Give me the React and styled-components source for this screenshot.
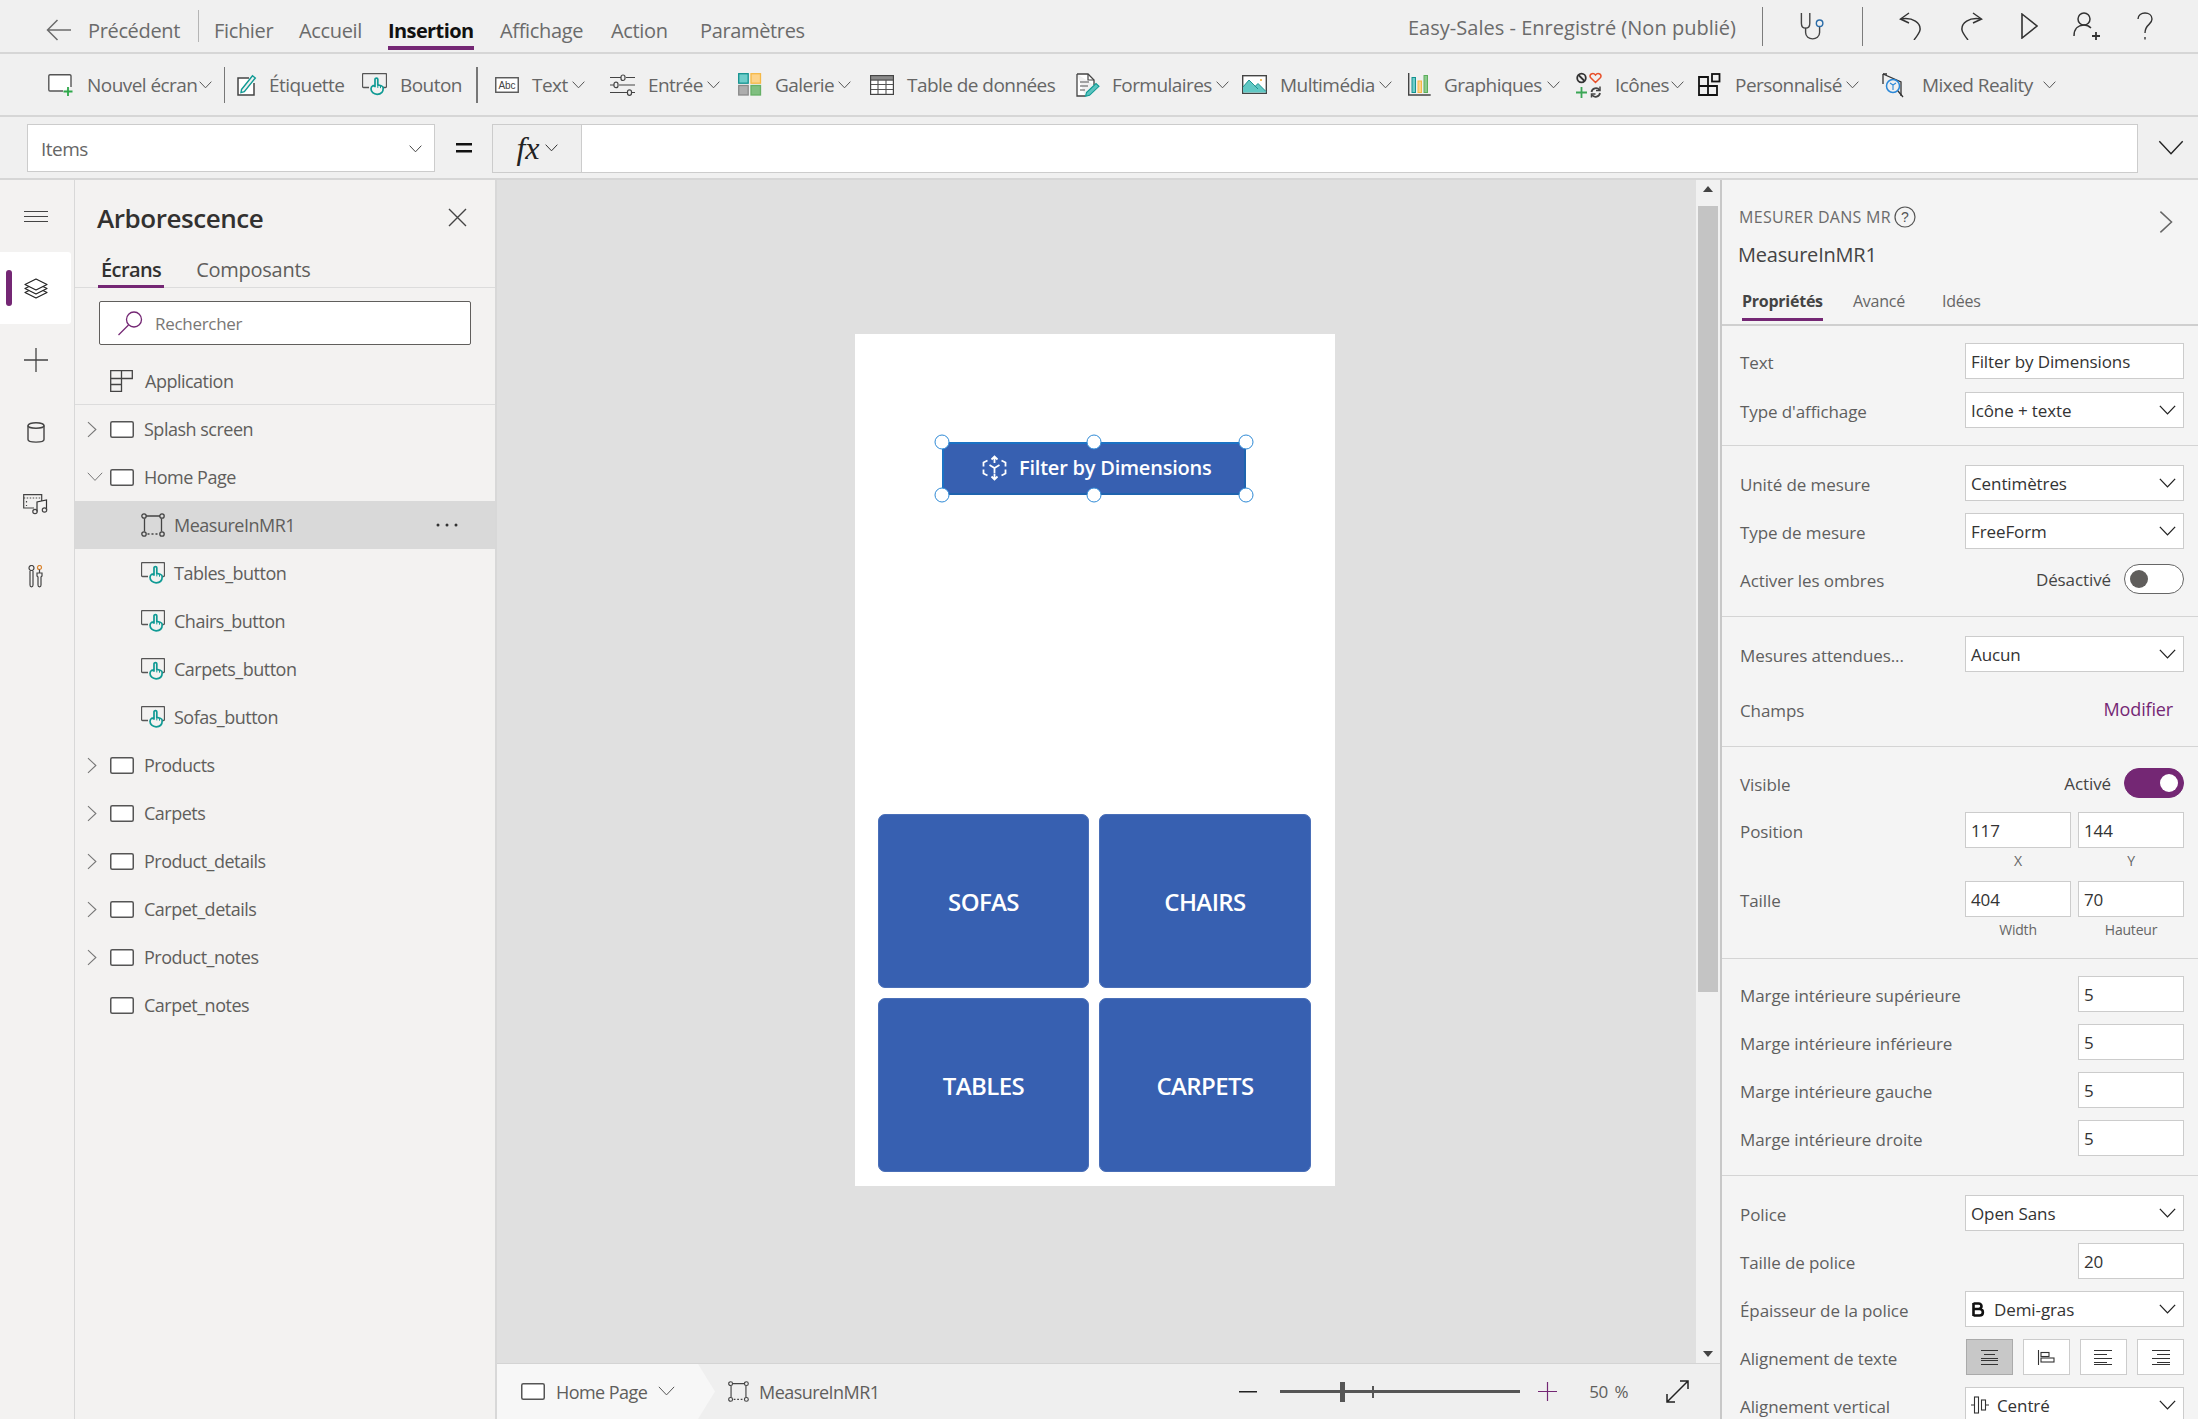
import React from "react";
import styled, { createGlobalStyle } from "styled-components";

const purple = "#742774";
const blue = "#3760b1";

const GlobalStyle = createGlobalStyle`
  html, body { margin: 0; padding: 0; background: #f0f0f0; }
  body { font-family: "Open Sans", "Noto Sans", sans-serif; overflow: hidden; }
  * { box-sizing: border-box; }
  svg { display: block; flex-shrink: 0; }
`;

const Page = styled.div`
  width: 2198px;
  height: 1419px;
  display: flex;
  flex-direction: column;
  overflow: hidden;
  color: #605e5c;
`;

/* top menu */
const MenuBar = styled.div`
  height: 54px;
  flex-shrink: 0;
  display: flex;
  align-items: stretch;
  padding-left: 46px;
  background: #f0f0f0;
  border-bottom: 2px solid #d6d6d6;
  font-size: 20px;
  letter-spacing: -0.35px;
`;
const BackArrow = styled.div`
  width: 42px;
  display: flex;
  align-items: center;
  padding-top: 8px;
`;
const MenuItem = styled.div`
  width: ${(p) => p.$w}px;
  display: flex;
  align-items: center;
  color: #6b6b6b;
  padding-top: 8px;
`;
const MenuSep = styled.div`
  width: 1px;
  height: 32px;
  margin: 10px 15px 0 0;
  background: #b5b5b5;
`;
const ActiveMenu = styled.div`
  width: 112px;
  position: relative;
  display: flex;
  align-items: center;
  color: #111;
  font-weight: 700;
  letter-spacing: -0.6px;
  padding-top: 8px;
  &::after {
    content: "";
    position: absolute;
    left: 0;
    width: 86px;
    top: 46px;
    height: 4px;
    background: ${purple};
  }
`;
const MenuRight = styled.div`
  margin-left: auto;
  display: flex;
  align-items: center;
  padding-right: 45px;
`;
const DocTitle = styled.div`
  color: #6b6b6b;
  font-size: 20px;
  letter-spacing: 0.02px;
  margin-right: 26px;
  padding-top: 3px;
  white-space: nowrap;
`;
const RightSep = styled.div`
  width: 1px;
  height: 39px;
  background: #7c7c7c;
  margin: 0 ${(p) => p.$r}px 0 0;
`;
const RightIcon = styled.div`
  margin-right: ${(p) => p.$r}px;
`;

/* insert toolbar */
const ToolBar = styled.div`
  height: 63px;
  flex-shrink: 0;
  display: flex;
  align-items: center;
  padding-left: 48px;
  background: #f0f0f0;
  border-bottom: 2px solid #d6d6d6;
  font-size: 19px;
  letter-spacing: -0.55px;
  color: #666;
`;
const ToolItem = styled.div`
  width: ${(p) => p.$w}px;
  display: flex;
  align-items: center;
  white-space: nowrap;
`;
const ToolIcon = styled.div`
  width: ${(p) => p.$w}px;
  display: flex;
  align-items: center;
`;
const ToolChevron = styled.div`
  margin-left: ${(p) => p.$m || 4}px;
`;
const ToolSep = styled.div`
  width: ${(p) => p.$b}px;
  height: 36px;
  margin-right: ${(p) => p.$r}px;
  background: #777;
`;

/* formula bar */
const FormulaBar = styled.div`
  height: 63px;
  flex-shrink: 0;
  display: flex;
  align-items: center;
  padding: 1px 0 0 27px;
  background: #f0f0f0;
  border-bottom: 2px solid #d6d6d6;
`;
const PropSelect = styled.div`
  width: 408px;
  height: 48px;
  background: #fff;
  border: 1px solid #ccc;
  display: flex;
  align-items: center;
  justify-content: space-between;
  padding: 2px 12px 0 13px;
  font-size: 19px;
  letter-spacing: -0.5px;
  color: #666;
`;
const EqualSign = styled.div`
  width: 57px;
  display: flex;
  justify-content: center;
`;
const FxBox = styled.div`
  width: 89px;
  height: 49px;
  background: #efefef;
  border: 1px solid #ccc;
  border-right: none;
  display: flex;
  align-items: center;
  justify-content: center;
  gap: 5px;
  font-family: "Liberation Serif", serif;
  font-style: italic;
  font-size: 32px;
  color: #222;
`;
const FormulaInput = styled.div`
  width: 1557px;
  height: 49px;
  background: #fff;
  border: 1px solid #ccc;
`;
const FormulaToggle = styled.div`
  margin-left: 20px;
`;

/* main area */
const Main = styled.div`
  flex: 1;
  min-height: 0;
  display: flex;
`;
const Rail = styled.div`
  width: 75px;
  flex-shrink: 0;
  background: #f3f2f1;
  border-right: 1px solid #d8d8d8;
  display: flex;
  flex-direction: column;
  padding-right: 3px;
`;
const RailButton = styled.div`
  height: 72px;
  display: flex;
  align-items: center;
  justify-content: center;
  position: relative;
  background: ${(p) => (p.$active ? "#fff" : "transparent")};
  border-radius: 0 3px 3px 0;
  &::before {
    content: "";
    display: ${(p) => (p.$active ? "block" : "none")};
    position: absolute;
    left: 6px;
    top: 18px;
    width: 6px;
    height: 36px;
    border-radius: 3px;
    background: ${purple};
  }
`;

const TreePanel = styled.div`
  width: 422px;
  flex-shrink: 0;
  background: #f3f2f1;
  border-right: 2px solid #d8d8d8;
  display: flex;
  flex-direction: column;
`;
const PanelHead = styled.div`
  height: 72px;
  display: flex;
  align-items: center;
  justify-content: space-between;
  padding: 3px 28px 0 22px;
`;
const PanelTitle = styled.div`
  font-size: 26px;
  font-weight: 600;
  color: #323130;
  letter-spacing: -0.45px;
`;
const TabRow = styled.div`
  height: 36px;
  display: flex;
  gap: 29px;
  padding-left: 23px;
  border-bottom: 1px solid #dcdcdc;
`;
const PanelTab = styled.div`
  height: 36px;
  font-size: 20px;
  letter-spacing: ${(p) => (p.$active ? -0.6 : -0.25)}px;
  line-height: 36px;
  padding: 0 3px;
  color: ${(p) => (p.$active ? "#323130" : "#605e5c")};
  font-weight: ${(p) => (p.$active ? 600 : 400)};
  border-bottom: ${(p) => (p.$active ? `3px solid ${purple}` : "none")};
`;
const SearchBox = styled.div`
  height: 44px;
  margin: 13px 24px 0 24px;
  background: #fff;
  border: 1px solid #605e5c;
  border-radius: 2px;
  display: flex;
  align-items: center;
  gap: 12px;
  padding-left: 18px;
  font-size: 17px;
  letter-spacing: -0.3px;
  color: #797775;
`;
const AppRow = styled.div`
  height: 60px;
  padding: 12px 0 0 35px;
  display: flex;
  align-items: center;
  gap: 12px;
  font-size: 18px;
  letter-spacing: -0.5px;
  border-bottom: 1px solid #dcdcdc;
`;
const TreeRow = styled.div`
  height: 48px;
  flex-shrink: 0;
  display: flex;
  align-items: center;
  padding-left: ${(p) => (p.$child ? 66 : 12)}px;
  padding-right: 37px;
  font-size: 18px;
  letter-spacing: -0.5px;
  background: ${(p) => (p.$selected ? "#d9d9d9" : "transparent")};
`;
const TreeCaret = styled.div`
  width: 23px;
`;
const TreeIcon = styled.div`
  width: ${(p) => (p.$child ? 33 : 34)}px;
`;
const RowMore = styled.div`
  margin-left: auto;
`;

/* canvas */
const CanvasColumn = styled.div`
  flex: 1;
  min-width: 0;
  display: flex;
  flex-direction: column;
`;
const Stage = styled.div`
  flex: 1;
  min-height: 0;
  display: flex;
`;
const CanvasArea = styled.div`
  flex: 1;
  background: #e0e0e0;
  padding: 154px 0 0 358px;
`;
const Frame = styled.div`
  width: 480px;
  height: 852px;
  background: #fff;
  padding: 108px 24px 0 22px;
`;
const FilterButton = styled.div`
  position: relative;
  width: 304px;
  height: 53px;
  margin-left: 65px;
  background: ${blue};
  box-shadow: inset 2px 2px 0 #1b72c4, inset -2px -2px 0 #1f63ae;
  display: flex;
  align-items: center;
  gap: 12px;
  padding: 0 0 2px 40px;
  color: #fff;
  font-size: 20px;
  font-weight: 600;
  letter-spacing: -0.22px;
`;
const Handle = styled.span`
  position: absolute;
  width: 15px;
  height: 15px;
  border-radius: 50%;
  background: #fff;
  border: 1.5px solid #2f8ad6;
  left: ${(p) => p.$x}%;
  top: ${(p) => p.$y}%;
  transform: translate(-50%, -50%);
`;
const TileGrid = styled.div`
  margin-top: 319px;
  margin-left: 1px;
  display: grid;
  grid-template-columns: 211px 212px;
  grid-template-rows: 174px 174px;
  gap: 10px;
`;
const Tile = styled.div`
  background: ${blue};
  border: 1px solid #4a6fb8;
  border-radius: 7px;
  color: #fff;
  font-size: 24px;
  font-weight: 600;
  letter-spacing: -0.6px;
  display: flex;
  align-items: center;
  justify-content: center;
`;
const ScrollBar = styled.div`
  width: 24px;
  flex-shrink: 0;
  background: #f1f1f1;
  display: flex;
  flex-direction: column;
  align-items: center;
  padding: 6px 2px;
`;
const ScrollThumb = styled.div`
  width: 20px;
  height: 786px;
  margin: 14px 0 auto;
  background: #c4c4c4;
`;
const StatusBar = styled.div`
  height: 56px;
  flex-shrink: 0;
  background: #efefef;
  border-top: 1px solid #d4d4d4;
  display: flex;
  align-items: center;
  font-size: 18px;
  letter-spacing: -0.55px;
`;
const Crumb = styled.div`
  width: 218px;
  height: 100%;
  padding-left: 24px;
  display: flex;
  align-items: center;
  gap: 11px;
  background: #f7f7f7;
  clip-path: polygon(0 0, 201px 0, 218px 50%, 201px 100%, 0 100%);
`;
const CrumbArrow = styled.div`
  width: 13px;
  height: 100%;
`;
const CrumbTail = styled.div`
  display: flex;
  align-items: center;
  gap: 10px;
`;
const ZoomTools = styled.div`
  margin-left: auto;
  padding-right: 30px;
  display: flex;
  align-items: center;
`;
const Slider = styled.div`
  position: relative;
  width: 240px;
  height: 3px;
  margin: 0 18px 0 23px;
  background: #555;
`;
const SliderMark = styled.span`
  position: absolute;
  left: ${(p) => p.$x}px;
  width: ${(p) => p.$w}px;
  height: ${(p) => p.$h}px;
  top: 50%;
  transform: translateY(-50%);
  background: #555;
`;
const ZoomLabel = styled.div`
  margin: 0 37px 0 32px;
  font-size: 17px;
  word-spacing: 3px;
`;

/* properties */
const PropsPanel = styled.div`
  width: 478px;
  flex-shrink: 0;
  background: #f4f4f4;
  border-left: 2px solid #c8c8c8;
  display: flex;
  flex-direction: column;
  overflow: hidden;
`;
const PropsHead = styled.div`
  height: 146px;
  flex-shrink: 0;
  position: relative;
  border-bottom: 2px solid #cfcfcf;
  padding: 26px 18px 0 17px;
`;
const KindRow = styled.div`
  display: flex;
  align-items: center;
  gap: 3px;
  font-size: 16px;
  letter-spacing: 0.3px;
  color: #6b6b6b;
`;
const CtrlName = styled.div`
  margin-top: 13px;
  margin-left: -1px;
  font-size: 20px;
  color: #444;
  letter-spacing: -0.2px;
`;
const HeadCollapse = styled.div`
  position: absolute;
  right: 25px;
  top: 30px;
`;
const PropsTabs = styled.div`
  display: flex;
  margin-top: 19px;
  padding-left: 3px;
  font-size: 16px;
  letter-spacing: -0.25px;
`;
const PropsTab = styled.div`
  width: ${(p) => p.$w}px;
  height: 34px;
  color: ${(p) => (p.$active ? "#444" : "#666")};
  font-weight: ${(p) => (p.$active ? 700 : 400)};
  span {
    display: inline-block;
    height: 34px;
    padding-top: 3px;
    border-bottom: ${(p) => (p.$active ? `3px solid ${purple}` : "none")};
  }
`;
const Section = styled.div`
  flex-shrink: 0;
  padding: ${(p) => p.$top}px 0 ${(p) => p.$bottom}px 18px;
  border-bottom: ${(p) => (p.$last ? "none" : "1px solid #d4d4d4")};
  display: flex;
  flex-direction: column;
  gap: ${(p) => p.$gap ?? 12}px;
`;
const Row = styled.div`
  height: ${(p) => p.$h || 36}px;
  flex-shrink: 0;
  display: flex;
  align-items: center;
  padding-right: 14px;
  font-size: 17px;
  letter-spacing: -0.1px;
  color: #5f5f5f;
`;
const Label = styled.div`
  white-space: nowrap;
  padding-top: 3px;
`;
const FieldWrap = styled.div`
  margin-left: auto;
  display: flex;
  gap: ${(p) => p.$gap || 7}px;
`;
const Field = styled.div`
  width: ${(p) => p.$w || 219}px;
  height: 36px;
  background: #fff;
  border: 1px solid #ccc;
  display: flex;
  align-items: center;
  justify-content: space-between;
  padding: 0 7px 0 5px;
  font-size: 17px;
  letter-spacing: -0.1px;
  color: #333;
  white-space: nowrap;
`;
const FieldText = styled.div`
  display: flex;
  align-items: center;
  gap: 8px;
`;
const Toggle = styled.div`
  width: 60px;
  height: 30px;
  border-radius: 15px;
  margin-left: 13px;
  border: 1px solid ${(p) => (p.$on ? purple : "#666")};
  background: ${(p) => (p.$on ? purple : "#fff")};
  display: flex;
  align-items: center;
  padding: 0 5px;
  justify-content: ${(p) => (p.$on ? "flex-end" : "flex-start")};
  &::after {
    content: "";
    width: 18px;
    height: 18px;
    border-radius: 50%;
    background: ${(p) => (p.$on ? "#fff" : "#605e5c")};
  }
`;
const ToggleWrap = styled.div`
  margin-left: auto;
  display: flex;
  align-items: center;
  color: #444;
`;
const LinkText = styled.div`
  margin-left: auto;
  padding-right: 11px;
  font-size: 18px;
  letter-spacing: -0.15px;
  color: ${purple};
`;
const SubLabels = styled.div`
  display: flex;
  justify-content: flex-end;
  gap: 7px;
  padding: 3px 14px 0 0;
  height: 23px;
  font-size: 14px;
  letter-spacing: -0.2px;
  color: #666;
`;
const SubLabel = styled.div`
  width: 106px;
  text-align: center;
`;
const AlignGroup = styled.div`
  margin-left: auto;
  display: flex;
  gap: 10px;
`;
const AlignBtn = styled.div`
  width: 47px;
  height: 36px;
  display: flex;
  align-items: center;
  justify-content: center;
  border: 1px solid ${(p) => (p.$active ? "#aaa" : "#ccc")};
  background: ${(p) => (p.$active ? "#c8c8c8" : "#fff")};
`;

/* icons */
const Chevron = ({ size = 13, color = "#555", w = 1 }) => (
  <svg width={size} height={size * 0.6} viewBox="0 0 20 12" fill="none">
    <path d="M1 1l9 9.5L19 1" stroke={color} strokeWidth={(w * 20) / size} />
  </svg>
);
const CaretRight = ({ h = 17, color = "#777" }) => (
  <svg width={h * 0.58} height={h} viewBox="0 0 10 17" fill="none">
    <path d="M1 1l8 7.5L1 16" stroke={color} strokeWidth="1.1" />
  </svg>
);
const ScreenIcon = ({ w = 24, h = 17 }) => (
  <svg width={w} height={h} viewBox="0 0 24 17">
    <rect x=".75" y=".75" width="22.5" height="15.5" rx="1.5" fill="#fff" stroke="#555" strokeWidth="1.5" />
  </svg>
);
const MeasureIcon = ({ s = 24 }) => (
  <svg width={s} height={s} viewBox="0 0 24 24" fill="none" stroke="#444" strokeWidth="1.3">
    <path d="M5 3h14M3.500 5.500v13M20.500 5.500v13" />
    <path d="M6.500 21h11" strokeDasharray="2 2" />
    <circle cx="3" cy="3" r="2.200" />
    <circle cx="21" cy="3" r="2.200" />
    <circle cx="3" cy="21" r="2.200" />
    <circle cx="21" cy="21" r="2.200" />
  </svg>
);
const HandPath = ({ dx = 0, dy = 0, stroke = "#0f9a94" }) => (
  <g transform={`translate(${dx} ${dy})`} fill="#f3f2f1" stroke={stroke} strokeWidth="1.7" strokeLinejoin="round">
    <path d="M5 1.8c0-1.6 2.8-1.6 2.800 0v5.600l3.400.9c1.400.4 2 1.300 2 2.500 0 3.600-2.200 6-6.100 6-3.500 0-6.100-2.400-6.100-5.600 0-1.500.9-2.500 2.200-3.200l1.800 1z" />
    <path d="M7.800 7.400v3M10.500 8.200v2.500" strokeWidth="1" />
  </g>
);
const ButtonTreeIcon = () => (
  <svg width="24" height="22" viewBox="0 0 24 22" fill="none">
    <path d="M7 14.5H1.5a1 1 0 0 1-1-1V1.5a1 1 0 0 1 1-1h21a1 1 0 0 1 1 1v12a1 1 0 0 1-1 1H20" stroke="#555" strokeWidth="1.3" />
    <HandPath dx="8" dy="4" />
  </svg>
);
const PlusGlyph = ({ s = 24, color = "#444", w = 1.3 }) => (
  <svg width={s} height={s} viewBox="0 0 24 24" stroke={color} strokeWidth={w}>
    <path d="M0 12h24M12 0v24" />
  </svg>
);

const NewScreenIcon = () => (
  <svg width="25" height="22" viewBox="0 0 25 22" fill="none">
    <path d="M15 17H2a1.2 1.2 0 0 1-1.2-1.2V1.9A1.2 1.2 0 0 1 2 .8h19.8A1.2 1.2 0 0 1 23 1.9V13" stroke="#555" strokeWidth="1.4" fill="#fff" />
    <path d="M20 13v9M15.5 17.500h9" stroke="#2ea84a" strokeWidth="1.8" />
  </svg>
);
const LabelIcon = () => (
  <svg width="20" height="22" viewBox="0 0 20 22" fill="none">
    <path d="M12 4H1v17h16V9" stroke="#444" strokeWidth="1.5" fill="#fff" />
    <path d="M4.500 15.500L15.500 1.800l2.800 2.200L7.300 17.600l-3.300 1z" stroke="#0f9a94" strokeWidth="1.4" fill="#f0f0f0" />
  </svg>
);
const ButtonIcon = () => (
  <svg width="25" height="23" viewBox="0 0 25 23" fill="none">
    <path d="M7 14.500H1.500a1 1 0 0 1-1-1V1.500a1 1 0 0 1 1-1h22a1 1 0 0 1 1 1v12a1 1 0 0 1-1 1H21" stroke="#555" strokeWidth="1.3" />
    <HandPath dx="8" dy="4.500" />
  </svg>
);
const AbcIcon = () => (
  <svg width="24" height="16" viewBox="0 0 24 16">
    <rect x=".75" y=".75" width="22.500" height="14.500" fill="#fff" stroke="#555" strokeWidth="1.4" />
    <text x="12" y="11.500" textAnchor="middle" fontSize="10" fontFamily="Liberation Sans, sans-serif" letterSpacing="0" fill="#444">Abc</text>
  </svg>
);
const SlidersIcon = () => (
  <svg width="25" height="22" viewBox="0 0 25 22" fill="none" stroke="#444" strokeWidth="1.2">
    <path d="M0 3.500h11M16 3.500h9M0 11h4M9 11h16M0 18.500h17M22 18.500h3" />
    <rect x="11" y="1" width="4" height="5.500" rx="2" />
    <rect x="4" y="8.200" width="4" height="5.500" rx="2" />
    <rect x="17.500" y="15.800" width="4" height="5.500" rx="2" />
  </svg>
);
const GalleryIcon = () => (
  <svg width="24" height="23" viewBox="0 0 24 23" strokeWidth="1.300">
    <rect x=".7" y=".7" width="9.500" height="9.500" fill="#6fcdca" stroke="#12928f" />
    <rect x="13" y=".7" width="9.500" height="9.500" fill="#fdd38a" stroke="#f5b846" />
    <rect x=".7" y="12.500" width="9.500" height="9.500" fill="#adadad" stroke="#8a8a8a" />
    <rect x="13" y="12.500" width="9.500" height="9.500" fill="#80bf80" stroke="#66b066" />
  </svg>
);
const TableIcon = () => (
  <svg width="24" height="20" viewBox="0 0 24 20" fill="none" stroke="#555" strokeWidth="1.1">
    <rect x=".6" y=".6" width="22.800" height="18.800" fill="#fff" stroke="#444" strokeWidth="1.200" />
    <rect x=".6" y=".6" width="22.800" height="4.500" fill="#8a8a8a" stroke="#444" />
    <path d="M1 9.500h22M1 14.500h22M8 5v14M16 5v14" />
  </svg>
);
const FormIcon = () => (
  <svg width="24" height="24" viewBox="0 0 24 24" fill="none">
    <path d="M1 1h11l6 6v5M1 1v22h8" stroke="#444" strokeWidth="1.300" fill="#fff" />
    <path d="M12 1v6h6" stroke="#444" strokeWidth="1.200" />
    <path d="M4 9h9M4 13h8M4 17h5" stroke="#555" strokeWidth="1.100" />
    <path d="M10.500 19.500L20 10.500l3 2.800-9.500 9-4 1z" fill="#5cc4c0" stroke="#0f9a94" strokeWidth="1.100" />
  </svg>
);
const MediaIcon = () => (
  <svg width="25" height="19" viewBox="0 0 25 19">
    <rect x=".7" y=".7" width="23.600" height="17.600" fill="#fff" stroke="#444" strokeWidth="1.400" />
    <path d="M1 17.500V12L7 5l6 6.500 3-3 8 8v1z" fill="#60c8c4" />
    <path d="M1 12L7 5l9 9M13 11.500l3-3 8 8" fill="none" stroke="#1b9490" strokeWidth="1" />
    <circle cx="19" cy="5" r="1" fill="#f5a623" />
  </svg>
);
const ChartIcon = () => (
  <svg width="23" height="23" viewBox="0 0 23 23" fill="none">
    <path d="M.7 0v22h22" stroke="#444" strokeWidth="1.400" />
    <rect x="4" y="4.500" width="3.500" height="15" fill="#6fcdca" stroke="#12928f" />
    <rect x="10" y="8" width="3.500" height="11.500" fill="#fdd38a" stroke="#f5b846" />
    <rect x="16" y="2.500" width="3.500" height="17" fill="#8ccb8c" stroke="#5cae5c" />
  </svg>
);
const IconsIcon = () => (
  <svg width="26" height="26" viewBox="0 0 26 26" fill="none">
    <circle cx="5.500" cy="6" r="4.300" stroke="#333" strokeWidth="1.800" />
    <path d="M2.500 3l6 6" stroke="#333" strokeWidth="1.800" />
    <path d="M19.500 10.500l-5-5c-2-3 2.500-5.500 5-2.500 2.500-3 7-.5 5 2.500z" stroke="#e8502a" strokeWidth="1.500" />
    <path d="M0 20.500h11M5.500 15v11" stroke="#3aa655" strokeWidth="1.800" />
    <path d="M15.500 20a4.500 4.500 0 0 1 8-2M24 21a4.500 4.500 0 0 1-8 2" stroke="#444" strokeWidth="1.800" />
    <path d="M24 14.500V18.500h-4M15.500 25.500V22h4" stroke="#444" strokeWidth="1.500" />
  </svg>
);
const CustomIcon = () => (
  <svg width="23" height="23" viewBox="0 0 23 23" fill="none" stroke="#111" strokeWidth="1.800">
    <path d="M1 4h9v9H1zM1 13h9v9H1zM10 13h9v9h-9z" />
    <rect x="14" y="1" width="7.500" height="7.500" />
  </svg>
);
const MrIcon = () => (
  <svg width="24" height="26" viewBox="0 0 24 26" fill="none">
    <path d="M1 2l18 8v14" stroke="#333" strokeWidth="1.300" />
    <path d="M1 2v10M1 2l4 0" stroke="#333" strokeWidth="1.300" />
    <circle cx="11" cy="14" r="6.500" stroke="#2b88d8" strokeWidth="1.500" />
    <path d="M8 11l3 2 3-2M11 13v5" stroke="#2b88d8" strokeWidth="1.100" />
    <path d="M16 19l5 6" stroke="#333" strokeWidth="1.300" />
  </svg>
);
const BackIcon = () => (
  <svg width="25" height="22" viewBox="0 0 25 22" fill="none" stroke="#6b6b6b" strokeWidth="1.500">
    <path d="M11.500 1L1.500 11l10 10M1.500 11H25" />
  </svg>
);
const StethoIcon = () => (
  <svg width="30" height="28" viewBox="0 0 30 30" fill="none" stroke="#444" strokeWidth="1.500">
    <path d="M1.500 1v11c0 7 9 7 9 0V1" />
    <path d="M6 17v5c0 9 15 9 15 0v-6" />
    <circle cx="21" cy="12" r="3.500" stroke="#2b6ca8" />
  </svg>
);
const UndoIcon = ({ flip }) => (
  <svg width="23" height="28" viewBox="0 0 23 28" fill="none" stroke="#333" strokeWidth="1.500" style={flip ? { transform: "scaleX(-1)" } : undefined}>
    <path d="M10 1L1.500 7 10 11" />
    <path d="M2 7c12-2 20 4 19 11-.5 3-3 6-6 10" />
  </svg>
);
const PlayIcon = () => (
  <svg width="17" height="26" viewBox="0 0 17 26" fill="none" stroke="#333" strokeWidth="1.600">
    <path d="M1 1l15 12L1 25z" />
  </svg>
);
const UserAddIcon = () => (
  <svg width="28" height="28" viewBox="0 0 28 28" fill="none" stroke="#333" strokeWidth="1.500">
    <circle cx="11" cy="7" r="6" />
    <path d="M1 24c0-8 5-11 10-11 3 0 5 1 7 3" />
    <path d="M23 20v8M19 24h8" strokeWidth="1.800" />
  </svg>
);
const HelpIcon = () => (
  <svg width="16" height="28" viewBox="0 0 16 28" fill="none" stroke="#333" strokeWidth="1.400">
    <path d="M1 7c0-8 14-8 14 0 0 6-7 5-7 14" />
    <path d="M8 25v2.500" />
  </svg>
);
const CloseIcon = () => (
  <svg width="19" height="19" viewBox="0 0 19 19" stroke="#444" strokeWidth="1.400">
    <path d="M1 1l17 17M18 1L1 18" />
  </svg>
);
const BurgerIcon = () => (
  <svg width="24" height="11" viewBox="0 0 24 11" stroke="#444" strokeWidth="1">
    <path d="M0 .5h24M0 5.500h24M0 10.500h24" />
  </svg>
);
const LayersIcon = () => (
  <svg width="24" height="21" viewBox="0 0 24 21" fill="#fff" stroke="#222" strokeWidth="1.200" strokeLinejoin="round">
    <path d="M1 14.500l11 5.500 11-5.500-11-5.500z" />
    <path d="M1 10.500L12 16l11-5.500L12 5z" />
    <path d="M1 6.500L12 12l11-5.500L12 1z" />
  </svg>
);
const DataIcon = () => (
  <svg width="18" height="21" viewBox="0 0 18 21" fill="none" stroke="#444" strokeWidth="1.400">
    <ellipse cx="9" cy="3.500" rx="8" ry="2.800" />
    <path d="M1 3.500v14c0 3.500 16 3.500 16 0v-14" />
  </svg>
);
const MediaRailIcon = () => (
  <svg width="25" height="21" viewBox="0 0 25 21" fill="none" stroke="#444" strokeWidth="1.200">
    <path d="M11 14H.7V.7h18V7" />
    <path d="M.7 4h18M3.500 7v2M3.500 11v1" strokeDasharray="1.500 1.500" />
    <path d="M14 17.500V8l9.500-2v10" stroke="#333" />
    <circle cx="12" cy="17.500" r="2.200" />
    <circle cx="21.500" cy="16" r="2.200" />
  </svg>
);
const ToolsIcon = () => (
  <svg width="15" height="23" viewBox="0 0 15 23" fill="none" stroke="#444" strokeWidth="1.200">
    <circle cx="3.500" cy="3" r="2.500" />
    <path d="M2 6v14c0 2.500 3 2.500 3 0V6" />
    <circle cx="11.500" cy="2.500" r="2" stroke="#d9822b" />
    <path d="M9 8h5v3l-1 1v8c0 2.500-3 2.500-3 0v-8l-1-1zM11.500 4.500V8" />
  </svg>
);
const SearchIcon = () => (
  <svg width="25" height="25" viewBox="0 0 25 25" fill="none" stroke={purple} strokeWidth="1.300">
    <circle cx="16" cy="8.500" r="7.500" />
    <path d="M10.500 14L.5 24" />
  </svg>
);
const AppIcon = () => (
  <svg width="23" height="22" viewBox="0 0 23 22" fill="none" stroke="#444" strokeWidth="1.300">
    <path d="M.7 8.500h10.800V21.300H.7zM.7 8.500V.7h10.800v7.800M11.500.7h10.800v7.800H11.500zM11.500 14.500H.7" />
  </svg>
);
const DotsIcon = () => (
  <svg width="22" height="4" viewBox="0 0 22 4" fill="#333">
    <circle cx="2" cy="2" r="1.500" />
    <circle cx="11" cy="2" r="1.500" />
    <circle cx="20" cy="2" r="1.500" />
  </svg>
);
const CubeIcon = () => (
  <svg width="25" height="26" viewBox="0 0 25 26" fill="none" stroke="#fff" strokeWidth="1.800">
    <path d="M12.500 8V2M9.500 4.500l3-3 3 3" />
    <path d="M12.500 13l-5-3M12.500 13l5-3M12.500 13v5" />
    <path d="M12.500 24.500v-6M9.500 21.500l3 3 3-3" />
    <path d="M5.500 5.500l-4 2v4M19.500 5.500l4 2v4M5.500 20.500l-4-2v-4M19.500 20.500l4-2v-4" />
  </svg>
);
const QuestionCircle = () => (
  <svg width="22" height="22" viewBox="0 0 22 22" fill="none" stroke="#555" strokeWidth="1.200">
    <circle cx="11" cy="11" r="10" />
    <text x="11" y="16" textAnchor="middle" fontSize="14" fontFamily="Liberation Sans, sans-serif" stroke="none" fill="#555">?</text>
  </svg>
);
const ExpandIcon = () => (
  <svg width="25" height="25" viewBox="0 0 25 25" fill="none" stroke="#222" strokeWidth="1.500">
    <path d="M2 23L23 2M15 2h8v8M2 15v8h8" />
  </svg>
);
const AlignCenterIcon = () => (
  <svg width="19" height="15" viewBox="0 0 19 15" stroke="#333" strokeWidth="1.100">
    <path d="M1 .5h17M4 4.500h11M1 8.500h17M1 10.500h17M1 14.500h17" />
  </svg>
);
const AlignLeftIcon = () => (
  <svg width="19" height="15" viewBox="0 0 19 15" stroke="#333" fill="none" strokeWidth="1.100">
    <path d="M1.500 0v15" />
    <rect x="4" y="2.500" width="8" height="4" />
    <rect x="4" y="8" width="13" height="4" />
  </svg>
);
const AlignLinesIcon = ({ right }) => (
  <svg width="19" height="15" viewBox="0 0 19 15" stroke="#333" strokeWidth="1.100">
    <path d={right ? "M1 .5h18M6 4.500h13M1 8.500h18M6 12.500h13M1 14.500h18" : "M0 .5h18M0 4.500h13M0 8.500h18M0 12.500h13M0 14.500h18"} />
  </svg>
);
const VAlignIcon = () => (
  <svg width="18" height="18" viewBox="0 0 18 18" fill="none" stroke="#333" strokeWidth="1.100">
    <path d="M0 9h3M15 9h3" />
    <rect x="3.500" y="1" width="4" height="16" />
    <rect x="10.500" y="4" width="4" height="10" />
  </svg>
);

const tools = [
  { w: 176, iw: 39, label: "Nouvel écran", icon: <NewScreenIcon />, chev: 2 },
  { sep: 1, r: 12 },
  { w: 125, iw: 32, label: "Étiquette", icon: <LabelIcon /> },
  { w: 114, iw: 38, label: "Bouton", icon: <ButtonIcon /> },
  { sep: 2, r: 17 },
  { w: 115, iw: 37, label: "Text", icon: <AbcIcon />, chev: 4 },
  { w: 128, iw: 38, label: "Entrée", icon: <SlidersIcon /> },
  { w: 132, iw: 37, label: "Galerie", icon: <GalleryIcon /> },
  { w: 206, iw: 37, label: "Table de données", icon: <TableIcon /> },
  { w: 166, iw: 36, label: "Formulaires", icon: <FormIcon /> },
  { w: 166, iw: 38, label: "Multimédia", icon: <MediaIcon /> },
  { w: 168, iw: 36, label: "Graphiques", icon: <ChartIcon />, chev: 5 },
  { w: 122, iw: 39, label: "Icônes", icon: <IconsIcon />, chev: 2 },
  { w: 184, iw: 37, label: "Personnalisé", icon: <CustomIcon /> },
  { w: 180, iw: 40, label: "Mixed Reality", icon: <MrIcon />, chev: 10 },
];

const screens = [
  { name: "Splash screen", caret: "right" },
  { name: "Home Page", caret: "down" },
  { name: "MeasureInMR1", child: true, selected: true, measure: true },
  { name: "Tables_button", child: true },
  { name: "Chairs_button", child: true },
  { name: "Carpets_button", child: true },
  { name: "Sofas_button", child: true },
  { name: "Products", caret: "right" },
  { name: "Carpets", caret: "right" },
  { name: "Product_details", caret: "right" },
  { name: "Carpet_details", caret: "right" },
  { name: "Product_notes", caret: "right" },
  { name: "Carpet_notes" },
];

const handles = [
  [0, 0],
  [50, 0],
  [100, 0],
  [0, 100],
  [50, 100],
  [100, 100],
];

const SelectField = ({ children, w }) => (
  <Field $w={w}>
    <FieldText>{children}</FieldText>
    <Chevron size={17} color="#222" w={1.3} />
  </Field>
);

const PropRow = ({ label, children }) => (
  <Row>
    <Label>{label}</Label>
    <FieldWrap>{children}</FieldWrap>
  </Row>
);

export default function App() {
  return (
    <Page>
      <GlobalStyle />
      <MenuBar>
        <BackArrow><BackIcon /></BackArrow>
        <MenuItem $w={110}>Précédent</MenuItem>
        <MenuSep />
        <MenuItem $w={85}>Fichier</MenuItem>
        <MenuItem $w={89}>Accueil</MenuItem>
        <ActiveMenu>Insertion</ActiveMenu>
        <MenuItem $w={111}>Affichage</MenuItem>
        <MenuItem $w={89}>Action</MenuItem>
        <MenuItem $w={104}>Paramètres</MenuItem>
        <MenuRight>
          <DocTitle>Easy-Sales - Enregistré (Non publié)</DocTitle>
          <RightSep $r={36} />
          <RightIcon $r={33}><StethoIcon /></RightIcon>
          <RightSep $r={36} />
          <RightIcon $r={38}><UndoIcon /></RightIcon>
          <RightIcon $r={38}><UndoIcon flip /></RightIcon>
          <RightIcon $r={35}><PlayIcon /></RightIcon>
          <RightIcon $r={36}><UserAddIcon /></RightIcon>
          <HelpIcon />
        </MenuRight>
      </MenuBar>

      <ToolBar>
        {tools.map((t, i) =>
          t.sep ? (
            <ToolSep key={i} $b={t.sep} $r={t.r} />
          ) : (
            <ToolItem key={i} $w={t.w}>
              <ToolIcon $w={t.iw}>{t.icon}</ToolIcon>
              {t.label}
              {t.label !== "Étiquette" && t.label !== "Bouton" && t.label !== "Table de données" && (
                <ToolChevron $m={t.chev}><Chevron size={13} color="#555" /></ToolChevron>
              )}
            </ToolItem>
          )
        )}
      </ToolBar>

      <FormulaBar>
        <PropSelect>
          Items
          <Chevron size={13} color="#444" />
        </PropSelect>
        <EqualSign>
          <svg width="16" height="10" viewBox="0 0 16 10" fill="#111">
            <rect width="16" height="2.500" />
            <rect y="7" width="16" height="2.500" />
          </svg>
        </EqualSign>
        <FxBox>
          fx
          <Chevron size={13} color="#333" />
        </FxBox>
        <FormulaInput />
        <FormulaToggle><Chevron size={26} color="#222" w={1.4} /></FormulaToggle>
      </FormulaBar>

      <Main>
        <Rail>
          <RailButton><BurgerIcon /></RailButton>
          <RailButton $active><LayersIcon /></RailButton>
          <RailButton><PlusGlyph /></RailButton>
          <RailButton><DataIcon /></RailButton>
          <RailButton><MediaRailIcon /></RailButton>
          <RailButton><ToolsIcon /></RailButton>
        </Rail>

        <TreePanel>
          <PanelHead>
            <PanelTitle>Arborescence</PanelTitle>
            <CloseIcon />
          </PanelHead>
          <TabRow>
            <PanelTab $active>Écrans</PanelTab>
            <PanelTab>Composants</PanelTab>
          </TabRow>
          <SearchBox>
            <SearchIcon />
            Rechercher
          </SearchBox>
          <AppRow>
            <AppIcon />
            Application
          </AppRow>
          {screens.map((s) => (
            <TreeRow key={s.name} $child={s.child} $selected={s.selected}>
              {!s.child && (
                <TreeCaret>
                  {s.caret === "right" && <CaretRight />}
                  {s.caret === "down" && <Chevron size={16} color="#777" />}
                </TreeCaret>
              )}
              <TreeIcon $child={s.child}>
                {s.child ? s.measure ? <MeasureIcon /> : <ButtonTreeIcon /> : <ScreenIcon />}
              </TreeIcon>
              {s.name}
              {s.selected && <RowMore><DotsIcon /></RowMore>}
            </TreeRow>
          ))}
        </TreePanel>

        <CanvasColumn>
          <Stage>
            <CanvasArea>
              <Frame>
                <FilterButton>
                  <CubeIcon />
                  Filter by Dimensions
                  {handles.map(([x, y]) => (
                    <Handle key={`${x}-${y}`} $x={x} $y={y} />
                  ))}
                </FilterButton>
                <TileGrid>
                  <Tile>SOFAS</Tile>
                  <Tile>CHAIRS</Tile>
                  <Tile>TABLES</Tile>
                  <Tile>CARPETS</Tile>
                </TileGrid>
              </Frame>
            </CanvasArea>
            <ScrollBar>
              <svg width="10" height="6" viewBox="0 0 10 6" fill="#444"><path d="M5 0l5 6H0z" /></svg>
              <ScrollThumb />
              <svg width="10" height="6" viewBox="0 0 10 6" fill="#444"><path d="M5 6l5-6H0z" /></svg>
            </ScrollBar>
          </Stage>
          <StatusBar>
            <Crumb>
              <ScreenIcon />
              Home Page
              <Chevron size={17} color="#555" />
            </Crumb>
            <CrumbArrow />
            <CrumbTail>
              <MeasureIcon s={21} />
              MeasureInMR1
            </CrumbTail>
            <ZoomTools>
              <svg width="18" height="2" viewBox="0 0 18 2" fill="#222"><rect width="18" height="1.500" /></svg>
              <Slider>
                <SliderMark $x={60} $w={5} $h={20} />
                <SliderMark $x={92} $w={2} $h={12} />
              </Slider>
              <PlusGlyph s={19} color="#742774" w={1.5} />
              <ZoomLabel>50 %</ZoomLabel>
              <ExpandIcon />
            </ZoomTools>
          </StatusBar>
        </CanvasColumn>

        <PropsPanel>
          <PropsHead>
            <KindRow>MESURER DANS MR <QuestionCircle /></KindRow>
            <CtrlName>MeasureInMR1</CtrlName>
            <HeadCollapse><CaretRight h={24} color="#666" /></HeadCollapse>
            <PropsTabs>
              <PropsTab $active $w={111}><span>Propriétés</span></PropsTab>
              <PropsTab $w={89}><span>Avancé</span></PropsTab>
              <PropsTab $w={60}><span>Idées</span></PropsTab>
            </PropsTabs>
          </PropsHead>

          <Section $top={17} $bottom={17} $gap={13}>
            <PropRow label="Text"><Field>Filter by Dimensions</Field></PropRow>
            <PropRow label="Type d'affichage"><SelectField>Icône + texte</SelectField></PropRow>
          </Section>

          <Section $top={19} $bottom={19} $gap={12}>
            <PropRow label="Unité de mesure"><SelectField>Centimètres</SelectField></PropRow>
            <PropRow label="Type de mesure"><SelectField>FreeForm</SelectField></PropRow>
            <Row>
              <Label>Activer les ombres</Label>
              <ToggleWrap>Désactivé<Toggle /></ToggleWrap>
            </Row>
          </Section>

          <Section $top={19} $bottom={19} $gap={19}>
            <PropRow label="Mesures attendues..."><SelectField>Aucun</SelectField></PropRow>
            <Row>
              <Label>Champs</Label>
              <LinkText>Modifier</LinkText>
            </Row>
          </Section>

          <Section $top={17} $bottom={18} $gap={10}>
            <Row $h={38}>
              <Label>Visible</Label>
              <ToggleWrap>Activé<Toggle $on /></ToggleWrap>
            </Row>
            <div>
              <PropRow label="Position">
                <Field $w={106}>117</Field>
                <Field $w={106}>144</Field>
              </PropRow>
              <SubLabels><SubLabel>X</SubLabel><SubLabel>Y</SubLabel></SubLabels>
            </div>
            <div>
              <PropRow label="Taille">
                <Field $w={106}>404</Field>
                <Field $w={106}>70</Field>
              </PropRow>
              <SubLabels><SubLabel>Width</SubLabel><SubLabel>Hauteur</SubLabel></SubLabels>
            </div>
          </Section>

          <Section $top={17} $bottom={19} $gap={12}>
            <PropRow label="Marge intérieure supérieure"><Field $w={106}>5</Field></PropRow>
            <PropRow label="Marge intérieure inférieure"><Field $w={106}>5</Field></PropRow>
            <PropRow label="Marge intérieure gauche"><Field $w={106}>5</Field></PropRow>
            <PropRow label="Marge intérieure droite"><Field $w={106}>5</Field></PropRow>
          </Section>

          <Section $top={19} $bottom={0} $gap={12} $last>
            <PropRow label="Police"><SelectField>Open Sans</SelectField></PropRow>
            <PropRow label="Taille de police"><Field $w={106}>20</Field></PropRow>
            <PropRow label="Épaisseur de la police">
              <SelectField>
                <svg width="15" height="15" viewBox="0 0 15 15" fill="none" stroke="#111" strokeWidth="2.600">
                  <path d="M2.500 1v13M2.500 1.500h5c4 0 4 5.500 0 5.500h-5M2.500 7h6c4.500 0 4.500 6.500 0 6.500h-6" />
                </svg>
                Demi-gras
              </SelectField>
            </PropRow>
            <Row>
              <Label>Alignement de texte</Label>
              <AlignGroup>
                <AlignBtn $active><AlignCenterIcon /></AlignBtn>
                <AlignBtn><AlignLeftIcon /></AlignBtn>
                <AlignBtn><AlignLinesIcon /></AlignBtn>
                <AlignBtn><AlignLinesIcon right /></AlignBtn>
              </AlignGroup>
            </Row>
            <PropRow label="Alignement vertical">
              <SelectField><VAlignIcon />Centré</SelectField>
            </PropRow>
          </Section>
        </PropsPanel>
      </Main>
    </Page>
  );
}
